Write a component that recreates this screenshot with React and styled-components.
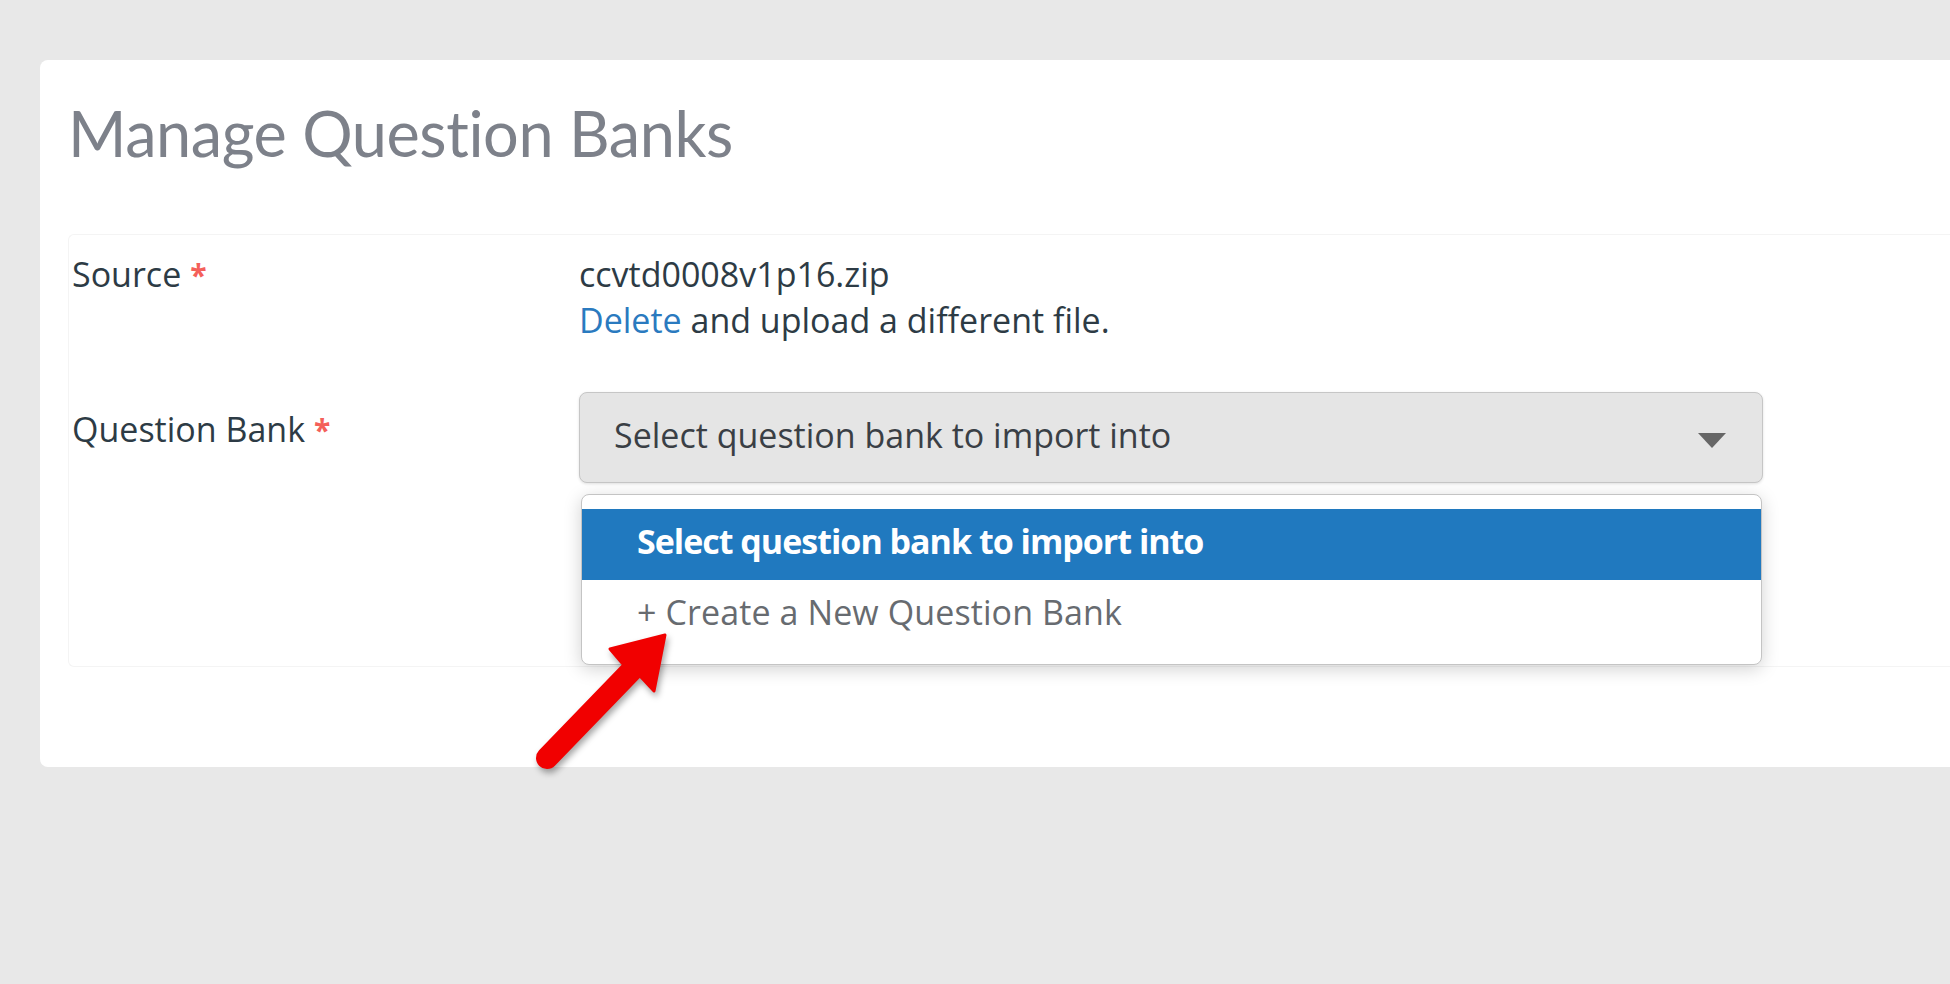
import React from "react";
import styled, { createGlobalStyle } from "styled-components";

const GlobalStyle = createGlobalStyle`
  html, body {
    margin: 0;
    padding: 0;
    background: #e8e8e8;
    overflow: hidden;
  }
  body {
    font-family: "Open Sans", "Lato", sans-serif;
    color: #2d3b45;
  }
`;

const Page = styled.div`
  padding: 60px 0 0 40px;
  height: 984px;
  box-sizing: border-box;
`;

const Card = styled.div`
  position: relative;
  background: #fff;
  border-radius: 8px 0 0 8px;
  height: 707px;
  margin-right: -40px;
  padding: 35px 0 0 28px;
  box-sizing: border-box;
`;

const Title = styled.h1`
  margin: 0;
  font-family: "Lato", "Open Sans", sans-serif;
  font-size: 63px;
  line-height: 76px;
  font-weight: 400;
  color: #7d818a;
  letter-spacing: -0.4px;
`;

const Panel = styled.div`
  margin-top: 63px;
  height: 433px;
  border: 1px solid #f4f4f4;
  border-right: none;
  border-radius: 6px 0 0 6px;
  padding-top: 16px;
  box-sizing: border-box;
`;

const Row = styled.div`
  display: grid;
  grid-template-columns: 510px 1184px;
  margin-top: ${(p) => p.gap || 0}px;
`;

const Label = styled.div`
  font-size: 34px;
  line-height: 46px;
  padding-left: 3px;
  padding-top: ${(p) => p.offset || 0}px;
  color: #2d3b45;
`;

const Req = styled.span`
  color: #f4605a;
  font-size: 30px;
  font-weight: 700;
  vertical-align: top;
  margin-left: 9px;
  position: relative;
  top: 1px;
`;

const Value = styled.div`
  font-size: 34px;
  line-height: 46px;
  color: #2d3b45;
`;

const Link = styled.a`
  color: #2a7abf;
  text-decoration: none;
`;

const SelectBox = styled.div`
  height: 91px;
  box-sizing: border-box;
  background: #e5e5e5;
  border: 1px solid #c6c6c6;
  border-radius: 8px;
  box-shadow: 0 1px 3px rgba(0, 0, 0, 0.12);
  display: flex;
  align-items: center;
  justify-content: space-between;
  padding: 0 36px 5px 34px;
  font-size: 34px;
  line-height: 46px;
  color: #3a3f45;
`;

const Caret = styled.span`
  width: 0;
  height: 0;
  border-left: 14px solid transparent;
  border-right: 14px solid transparent;
  border-top: 15px solid #666;
  margin-top: 10px;
`;

const List = styled.ul`
  list-style: none;
  margin: 11px 1px 0 2px;
  padding: 14px 0 13px;
  background: #fff;
  border: 1px solid #c4c4c4;
  border-radius: 8px;
  box-shadow: 0 4px 18px rgba(0, 0, 0, 0.18);
`;

const Option = styled.li`
  height: 71px;
  line-height: 64px;
  padding: 0 55px;
  font-size: 34px;
  font-weight: ${(p) => (p.active ? 700 : 400)};
  background: ${(p) => (p.active ? "#2079bf" : "transparent")};
  color: ${(p) => (p.active ? "#fff" : "#676b70")};
  letter-spacing: ${(p) => (p.active ? "-1px" : "0.1px")};
`;

const Pointer = styled.svg`
  position: absolute;
  left: 460px;
  top: 540px;
  width: 220px;
  height: 200px;
  overflow: visible;
  filter: drop-shadow(2px 4px 3px rgba(0, 0, 0, 0.35));
`;

const App = () => (
  <Page>
    <GlobalStyle />
    <Card>
      <Title>Manage Question Banks</Title>
      <Panel>
        <Row>
          <Label>
            Source<Req>*</Req>
          </Label>
          <Value>
            ccvtd0008v1p16.zip
            <br />
            <Link href="#">Delete</Link> and upload a different file.
          </Value>
        </Row>
        <Row gap={49}>
          <Label offset={14}>
            Question Bank<Req>*</Req>
          </Label>
          <div>
            <SelectBox>
              <span>Select question bank to import into</span>
              <Caret />
            </SelectBox>
            <List>
              <Option active>Select question bank to import into</Option>
              <Option>+ Create a New Question Bank</Option>
            </List>
          </div>
        </Row>
      </Panel>
      <Pointer viewBox="0 0 220 200">
        <line
          x1="47"
          y1="158"
          x2="134"
          y2="68"
          stroke="#f10000"
          strokeWidth="22"
          strokeLinecap="round"
        />
        <path
          d="M165 35 L154 91 L140 76 Q132 70 122 63 L110 49 Z"
          fill="#f10000"
          stroke="#f10000"
          strokeWidth="3"
          strokeLinejoin="round"
        />
      </Pointer>
    </Card>
  </Page>
);

export default App;
